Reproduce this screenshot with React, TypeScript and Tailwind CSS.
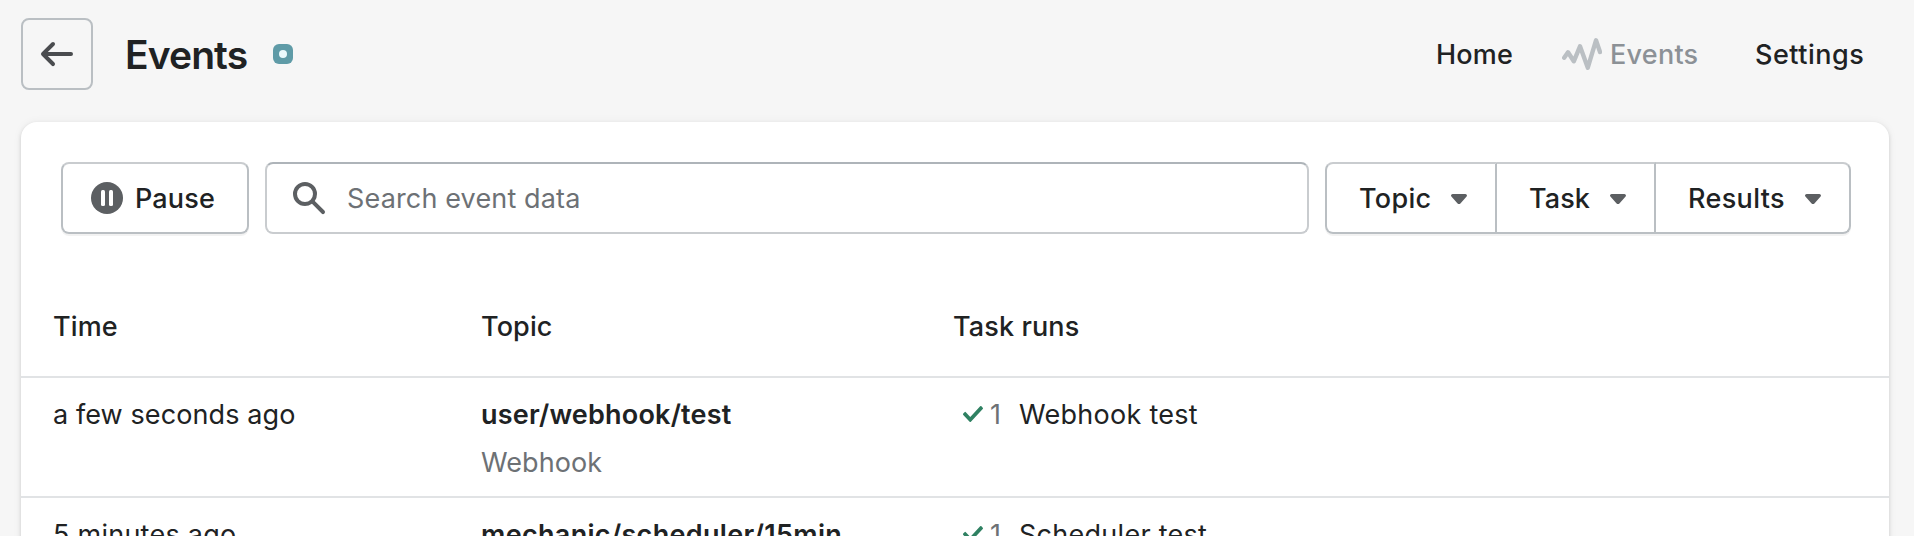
import React from "react";

const ARROW =
  "M17 9H5.414l3.293-3.293a.999.999 0 1 0-1.414-1.414l-5 5a.999.999 0 0 0 0 1.414l5 5a.997.997 0 0 0 1.414 0 .999.999 0 0 0 0-1.414L5.414 11H17a1 1 0 1 0 0-2z";
const SEARCH =
  "M8 12a4 4 0 1 1 0-8 4 4 0 0 1 0 8zm9.707 4.293-4.82-4.82A5.968 5.968 0 0 0 14 8 6 6 0 0 0 2 8a6 6 0 0 0 6 6 5.968 5.968 0 0 0 3.473-1.113l4.82 4.82a.997.997 0 0 0 1.414 0 .999.999 0 0 0 0-1.414z";
const CARET =
  "M13.098 8H6.902c-.751 0-1.172.754-.708 1.268L9.292 12.7c.36.399 1.055.399 1.416 0l3.098-3.433C14.27 8.754 13.849 8 13.098 8z";
const TICK =
  "m8.315 13.859-3.182-3.417a.506.506 0 0 1 0-.684l.643-.683a.437.437 0 0 1 .642 0l2.22 2.393 4.942-5.327a.436.436 0 0 1 .643 0l.643.684a.504.504 0 0 1 0 .683l-5.91 6.35a.437.437 0 0 1-.642 0z";

function Icon({ d, className }: { d: string; className: string }) {
  return (
    <svg viewBox="0 0 20 20" className={`size-10 shrink-0 ${className}`} fill="currentColor" aria-hidden="true">
      <path d={d} />
    </svg>
  );
}

function PauseIcon() {
  return (
    <svg viewBox="0 0 32 32" className="size-8 shrink-0" aria-hidden="true">
      <circle cx="16" cy="16" r="16" fill="#5c5f62" />
      <rect x="10" y="8" width="4" height="16" rx="1.5" fill="#fff" />
      <rect x="18" y="8" width="4" height="16" rx="1.5" fill="#fff" />
    </svg>
  );
}

function ActivityIcon() {
  return (
    <svg viewBox="0 0 40 40" className="size-10 shrink-0" aria-hidden="true">
      <path
        d="M2.2 23.7 6 18.3 11.8 27.3 18 12.3 25.8 33.7 34 6.3 38 18"
        fill="none"
        stroke="#babfc3"
        strokeWidth="4.4"
        strokeLinecap="round"
        strokeLinejoin="round"
      />
    </svg>
  );
}

const filters = [
  { label: "Topic", box: "w-[172px] rounded-l-lg border-l-2 pl-[32px]", text: "tracking-[0.3px]" },
  { label: "Task", box: "w-[159px] pl-[32px]", text: "tracking-[0.1px]" },
  { label: "Results", box: "w-[195px] rounded-r-lg pl-[32px]", text: "tracking-[0.35px]" },
];

const rows = [
  {
    time: "a few seconds ago",
    topic: "user/webhook/test",
    kind: "Webhook",
    task: "Webhook test",
    timeSpacing: "tracking-[0.1px]",
    topicSpacing: "tracking-[0.2px]",
  },
  {
    time: "5 minutes ago",
    topic: "mechanic/scheduler/15min",
    kind: "Scheduler",
    task: "Scheduler test",
    timeSpacing: "tracking-[0.25px]",
    topicSpacing: "tracking-[0.32px]",
  },
];

export default function App() {
  return (
    <div className="flex h-[536px] w-[1914px] flex-col overflow-hidden bg-[#f6f6f6] pr-[25px] pl-[21px] font-['Inter',sans-serif] text-[27px] leading-[48px] text-[#202223]">
      <header className="mt-[18px] flex h-[72px] shrink-0 items-center">
        <button className="flex size-[72px] items-center justify-center rounded-lg border-2 border-[#babfc3]" aria-label="Back">
          <Icon d={ARROW} className="text-[#4a4c4f]" />
        </button>
        <h1 className="ml-[32px] w-[123px] pt-0.5 text-[39px] font-semibold tracking-[-0.9px] whitespace-nowrap">Events</h1>
        <span className="ml-[25px] flex size-5 items-center justify-center rounded-md bg-[#5f9ba7]">
          <span className="size-2 rounded-full bg-[#ebf9fc]" />
        </span>
        <nav className="ml-auto flex items-center font-medium whitespace-nowrap">
          <a className="w-[126px] pt-0.5 tracking-[0.2px]">Home</a>
          <a className="flex w-[193px] items-center text-[#8c9196]">
            <ActivityIcon />
            <span className="ml-2 pt-0.5 tracking-[0.25px]">Events</span>
          </a>
          <a className="w-[134px] pt-0.5 tracking-[0.5px]">Settings</a>
        </nav>
      </header>

      <main className="mt-8 h-[600px] shrink-0 rounded-t-2xl bg-white shadow-[0_0_10px_rgba(23,24,24,0.05),0_2px_4px_rgba(0,0,0,0.15)]">
        <div className="flex items-start pt-10 pr-[38px] pl-10">
          <button className="flex h-[72px] w-[188px] items-center rounded-lg border-2 border-[#babfc3] border-t-[#c9cccf] pl-[28px] font-medium shadow-[0_2px_0_rgba(0,0,0,0.05)]">
            <PauseIcon />
            <span className="ml-3 pt-0.5 tracking-[0.15px]">Pause</span>
          </button>
          <div className="ml-4 flex h-[72px] flex-1 items-center rounded-lg border-2 border-[#c9cccf] border-t-[#aeb4b9] pl-[22px]">
            <Icon d={SEARCH} className="text-[#5c5f62]" />
            <span className="ml-[18px] pt-0.5 tracking-[0.15px] text-[#6d7175]">Search event data</span>
          </div>
          <div className="ml-4 flex">
            {filters.map((f) => (
              <button
                key={f.label}
                className={`flex h-[72px] items-center justify-between border-y-2 border-r-2 border-[#babfc3] border-t-[#c9cccf] pr-4 font-medium shadow-[0_2px_0_rgba(0,0,0,0.05)] ${f.box}`}
              >
                <span className={`pt-0.5 ${f.text}`}>{f.label}</span>
                <Icon d={CARET} className="text-[#5c5f62]" />
              </button>
            ))}
          </div>
        </div>

        <div className="mt-[44px] grid h-[100px] grid-cols-[428px_472px_1fr] border-b-2 border-[#e1e3e5] pt-[25px] pl-8 font-medium tracking-[0.12px]">
          <span>Time</span>
          <span>Topic</span>
          <span>Task runs</span>
        </div>
        {rows.map((r) => (
          <div key={r.topic} className="grid h-[120px] grid-cols-[428px_472px_1fr] border-b-2 border-[#e1e3e5] pt-[13px] pl-8">
            <span className={r.timeSpacing}>{r.time}</span>
            <div>
              <div className={`font-semibold ${r.topicSpacing}`}>{r.topic}</div>
              <div className="tracking-[0.05px] text-[#6d7175]">{r.kind}</div>
            </div>
            <div className="flex h-12 items-center">
              <Icon d={TICK} className="-mt-0.5 text-[#2f8162]" />
              <span className="-ml-[3px] w-[29px] text-[#6d7175]">1</span>
              <span className="tracking-[0.27px]">{r.task}</span>
            </div>
          </div>
        ))}
      </main>
    </div>
  );
}
